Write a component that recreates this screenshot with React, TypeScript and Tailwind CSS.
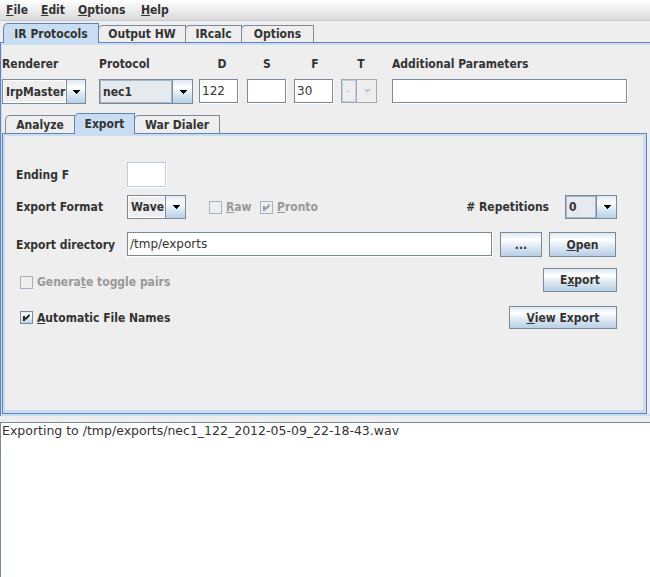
import React from 'react'

const btnGrad =
  'bg-[linear-gradient(to_bottom,#dde8f3_0%,#ffffff_30%,#dde8f3_60%,#b8cfe5_100%)]'

function Arrow({ disabled }: { disabled?: boolean }) {
  return (
    <svg width="8" height="4" viewBox="0 0 8 4" className="block" shapeRendering="crispEdges">
      <polygon points="0,0 8,0 4,4" fill={disabled ? '#b8cfe5' : '#000000'} />
    </svg>
  )
}

function Combo({
  text,
  className,
  focus,
  disabled,
}: {
  text: string
  className: string
  focus?: boolean
  disabled?: boolean
}) {
  if (disabled) {
    return (
      <div className={`flex border border-[#a8a8a8] bg-[#eeeeee] ${className}`}>
        <div className="flex-1 flex items-center pl-[3px] border border-[#b8cfe5] text-[#b8cfe5] font-normal">
          -
        </div>
        <div className="w-[20px] flex items-center justify-center border-l border-[#a8a8a8]">
          <Arrow disabled />
        </div>
      </div>
    )
  }
  return (
    <div className={`flex border border-[#7a8a99] bg-[#eeeeee] ${className}`}>
      <div
        className={`flex-1 flex items-center pl-[2px] border ${
          focus ? 'border-[#a3b8cc] bg-[#e6e9ee]' : 'border-[#ffffff]'
        }`}
      >
        {text}
      </div>
      <div className={`w-[20px] flex items-center justify-center border-l border-[#7a8a99] ${btnGrad}`}>
        <Arrow />
      </div>
    </div>
  )
}

function Field({ text, className, light }: { text?: string; className: string; light?: boolean }) {
  return (
    <div className={`border-r border-b border-white ${className}`}>
      <div
        className={`h-full w-full bg-white border flex items-center pl-[2px] font-['DejaVu_Sans',sans-serif] font-normal text-[12px] text-[#333333] ${
          light ? 'border-[#b8cfe5]' : 'border-[#7a8a99]'
        }`}
      >
        {text}
      </div>
    </div>
  )
}

function Button({ children, className }: { children: React.ReactNode; className: string }) {
  return (
    <div
      className={`flex items-center justify-center border border-[#7a8a99] ${btnGrad} ${className}`}
    >
      {children}
    </div>
  )
}

function Check({ checked, disabled }: { checked?: boolean; disabled?: boolean }) {
  const mark = disabled ? '#8c9cb0' : '#222222'
  return (
    <svg width="13" height="13" viewBox="0 0 13 13" className="block shrink-0" shapeRendering="crispEdges">
      {disabled ? (
        <rect x="0.5" y="0.5" width="12" height="12" fill="#eeeeee" stroke="#a3b3c6" />
      ) : (
        <>
          <defs>
            <linearGradient id="cbg" x1="0" y1="0" x2="0" y2="1">
              <stop offset="0" stopColor="#dde8f3" />
              <stop offset="0.3" stopColor="#ffffff" />
              <stop offset="0.6" stopColor="#dde8f3" />
              <stop offset="1" stopColor="#b8cfe5" />
            </linearGradient>
          </defs>
          <rect x="0.5" y="0.5" width="12" height="12" fill="url(#cbg)" stroke="#7a8a99" />
        </>
      )}
      {checked && (
        <>
          <rect x="3" y="5" width="2" height="5" fill={mark} />
          <path d="M9.5 3.5 L5 8 M9.5 4.5 L5.5 8.5" stroke={mark} strokeWidth="1.3" shapeRendering="auto" />
        </>
      )}
    </svg>
  )
}

function Tab({
  label,
  selected,
  className,
}: {
  label: string
  selected?: boolean
  className: string
}) {
  return (
    <div
      className={`flex items-center justify-center border-t border-l border-r rounded-tl-[5px] ${
        selected
          ? 'relative z-10 bg-[#c8ddf2] border-[#6382bf] -mb-px'
          : 'bg-[#eeeeee] border-[#7a8a99]'
      } ${className}`}
    >
      {label}
    </div>
  )
}

export default function App() {
  return (
    <div className="w-[650px] h-[577px] bg-[#eeeeee] flex flex-col overflow-hidden text-[#333333] font-['DejaVu_Sans_Condensed','Liberation_Sans',sans-serif] text-[12px] font-bold leading-none">
      {/* menu bar */}
      <div className="h-[21px] shrink-0 flex items-center pl-[6px] border-b border-[#c9c9c9] bg-[linear-gradient(to_bottom,#ffffff,#dadada)]">
        <span className="w-[35px]">
          <u>F</u>ile
        </span>
        <span className="w-[37px]">
          <u>E</u>dit
        </span>
        <span className="w-[63px]">
          <u>O</u>ptions
        </span>
        <span>
          <u>H</u>elp
        </span>
      </div>

      {/* outer tabs */}
      <div className="h-[21px] shrink-0 flex items-end pl-[3px]">
        <Tab label="IR Protocols" selected className="w-[96px] h-[20px]" />
        <Tab label="Output HW" className="w-[88px] h-[17px] -ml-px" />
        <Tab label="IRcalc" className="w-[57px] h-[17px] -ml-px" />
        <Tab label="Options" className="w-[73px] h-[17px] -ml-px" />
      </div>

      {/* outer content */}
      <div className="h-[374px] shrink-0 border-t border-l border-[#6382bf]">
        <div className="h-full border-t-2 border-l border-b-2 border-[#c8ddf2] flex flex-col">
          <div className="mt-[11px] flex">
            <div className="w-[84px]">
              <div className="h-[16px] flex items-center">Renderer</div>
              <Combo text="IrpMaster" className="mt-[7px] h-[25px] w-[84px]" />
            </div>
            <div className="w-[94px] ml-[13px]">
              <div className="h-[16px] flex items-center">Protocol</div>
              <Combo text="nec1" focus className="mt-[7px] h-[25px] w-[94px]" />
            </div>
            <div className="w-[40px] ml-[6px]">
              <div className="h-[16px] flex items-center justify-center pl-[6px]">D</div>
              <Field text="122" className="mt-[7px] h-[25px] w-[40px]" />
            </div>
            <div className="w-[40px] ml-[8px]">
              <div className="h-[16px] flex items-center justify-center">S</div>
              <Field className="mt-[7px] h-[25px] w-[40px]" />
            </div>
            <div className="w-[40px] ml-[7px]">
              <div className="h-[16px] flex items-center justify-center pl-[2px]">F</div>
              <Field text="30" className="mt-[7px] h-[25px] w-[40px]" />
            </div>
            <div className="w-[36px] ml-[7px]">
              <div className="h-[16px] flex items-center justify-center pl-[4px]">T</div>
              <Combo text="-" disabled className="mt-[7px] h-[24px] w-[36px]" />
            </div>
            <div className="w-[236px] ml-[15px]">
              <div className="h-[16px] flex items-center">Additional Parameters</div>
              <Field className="mt-[7px] h-[25px] w-[236px]" />
            </div>
          </div>

          {/* inner tabs */}
          <div className="h-[29px] shrink-0 flex items-end pl-[3px]">
            <Tab label="Analyze" className="w-[70px] h-[18px]" />
            <Tab label="Export" selected className="w-[61px] h-[21px] -ml-px" />
            <Tab label="War Dialer" className="w-[86px] h-[18px] -ml-px" />
          </div>

          {/* inner content */}
          <div className="h-[281px] shrink-0 mr-[3px] border border-[#6382bf]">
            <div className="h-full border-t-2 border-l-2 border-r-[3px] border-b-[3px] border-[#c8ddf2] pt-[26px] pl-[11px] pr-[26px] flex flex-col">
              <div className="h-[26px] flex items-center">
                <div className="w-[111px]">Ending F</div>
                <Field light className="h-[26px] w-[40px]" />
              </div>

              <div className="mt-[7px] h-[24px] flex items-center">
                <div className="w-[111px]">Export Format</div>
                <Combo text="Wave" className="h-[24px] w-[59px]" />
                <div className="ml-[23px] w-[51px] flex items-center gap-[4px] text-[#999999]">
                  <Check disabled />
                  <span>
                    <u>R</u>aw
                  </span>
                </div>
                <div className="flex items-center gap-[4px] text-[#999999]">
                  <Check disabled checked />
                  <span>
                    <u>P</u>ronto
                  </span>
                </div>
                <div className="flex-1" />
                <div>{'# Repetitions'}</div>
                <Combo text="0" focus className="ml-[16px] h-[24px] w-[52px]" />
              </div>

              <div className="mt-[13px] h-[25px] flex items-center">
                <div className="w-[111px]">Export directory</div>
                <Field text="/tmp/exports" className="h-[25px] w-[366px]" />
                <Button className="ml-[7px] h-[25px] w-[42px]">...</Button>
                <Button className="ml-[7px] h-[25px] w-[67px]">
                  <span>
                    <u>O</u>pen
                  </span>
                </Button>
              </div>

              <div className="mt-[11px] h-[24px] flex items-center">
                <div className="ml-[4px] flex items-center gap-[4px] text-[#999999] pt-[4px]">
                  <Check disabled />
                  <span>
                    Genera<u>t</u>e toggle pairs
                  </span>
                </div>
                <div className="flex-1" />
                <Button className="h-[24px] w-[74px]">
                  <span>
                    E<u>x</u>port
                  </span>
                </Button>
              </div>

              <div className="mt-[14px] h-[23px] flex items-center">
                <div className="ml-[4px] flex items-center gap-[4px]">
                  <Check checked />
                  <span>
                    <u>A</u>utomatic File Names
                  </span>
                </div>
                <div className="flex-1" />
                <Button className="h-[23px] w-[108px]">
                  <span>
                    <u>V</u>iew Export
                  </span>
                </Button>
              </div>
            </div>
          </div>
        </div>
      </div>

      {/* divider */}
      <div className="h-[6px] shrink-0" />

      {/* log area */}
      <div className="flex-1 bg-white border-t border-l border-[#7a8a99] pl-[1px] font-['DejaVu_Sans',sans-serif] font-normal text-[12.5px] leading-[15px] text-[#333333]">
        Exporting to /tmp/exports/nec1_122_2012-05-09_22-18-43.wav
      </div>
    </div>
  )
}
